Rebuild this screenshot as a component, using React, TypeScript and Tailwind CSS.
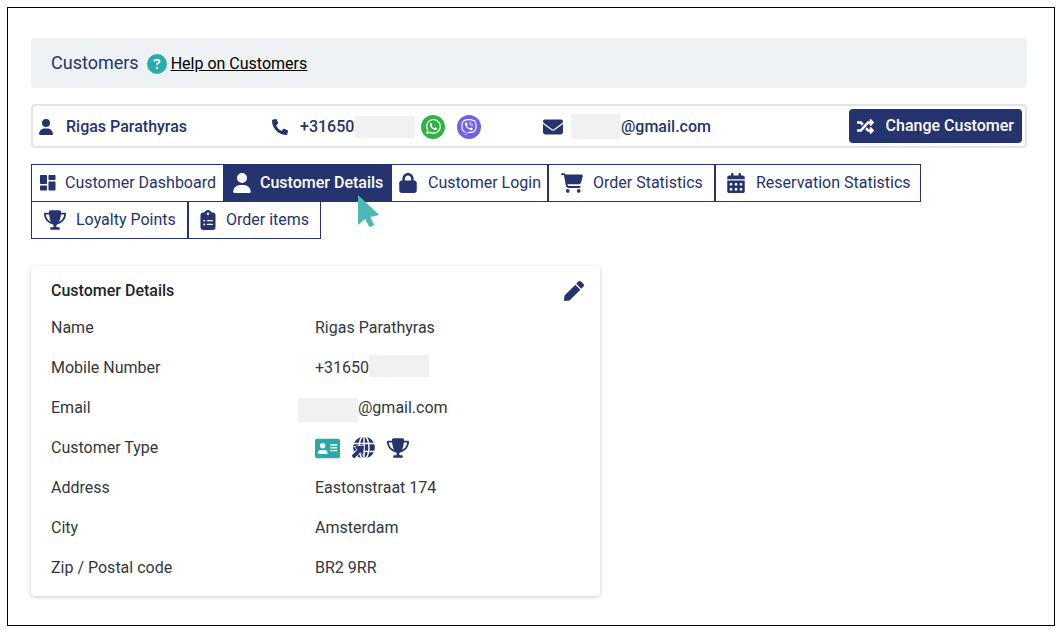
import type { ReactNode } from "react";
import { FaAddressCard, FaPen, FaPhoneAlt, FaRandom, FaViber, FaWhatsapp } from "react-icons/fa";
import {
  FaCalendarDays,
  FaCartShopping,
  FaCircleQuestion,
  FaClipboardList,
  FaEnvelope,
  FaLock,
  FaTrophy,
  FaUser,
} from "react-icons/fa6";
import clsx from "clsx";

const TABS = [
  { label: "Customer Dashboard", icon: <DashboardIcon />, className: "w-[193px] pl-[7px] gap-2" },
  { label: "Customer Details", icon: <FaUser size={20} />, className: "w-[167px] pl-[7px] gap-2", active: true },
  { label: "Customer Login", icon: <FaLock size={20} />, className: "w-[157px] pl-1.5 gap-2.5" },
  { label: "Order Statistics", icon: <FaCartShopping size={22} />, className: "w-[167px] pl-3 gap-2.5" },
  { label: "Reservation Statistics", icon: <FaCalendarDays size={20} />, className: "w-[206px] pl-2.5 gap-2.5" },
  { label: "Loyalty Points", icon: <FaTrophy size={22} />, className: "w-[157px] pl-3 gap-2.5" },
  { label: "Order items", icon: <FaClipboardList size={20} />, className: "w-[133px] pl-[9px] gap-2" },
];

const DETAILS: { label: string; value: ReactNode }[] = [
  { label: "Name", value: "Rigas Parathyras" },
  { label: "Mobile Number", value: <>+31650<Redacted className="mb-1 h-[22px] w-[60px]" /></> },
  { label: "Email", value: <><Redacted className="-ml-[17px] mt-1 h-6 w-[60px]" />@gmail.com</> },
  {
    label: "Customer Type",
    value: (
      <span className="flex items-center gap-3 text-[#25336f]">
        <FaAddressCard size={25} className="text-[#2aa9a8]" />
        <GlobePointerIcon />
        <FaTrophy size={22} />
      </span>
    ),
  },
  { label: "Address", value: "Eastonstraat 174" },
  { label: "City", value: "Amsterdam" },
  { label: "Zip / Postal code", value: "BR2 9RR" },
];

export default function App() {
  return (
    <div className="bg-white p-[7px] pr-2 font-[Roboto,sans-serif] text-base text-[#25336f]">
      <main className="border border-black pt-[30px] pr-[27px] pb-[29px] pl-[23px]">
        <header className="flex h-[50px] items-center rounded bg-[#eef2f5] px-5 pt-0.5">
          <h1 className="pb-0.5 text-lg">Customers</h1>
          <FaCircleQuestion size={20} className="ml-2 text-[#2aacab]" />
          <a href="#help" className="ml-1 text-black underline">Help on Customers</a>
        </header>

        <CustomerBar />

        <nav className="mt-4 flex flex-wrap">
          {TABS.map(tab => (
            <button
              key={tab.label}
              type="button"
              className={clsx(
                "relative -mb-px flex h-[38px] items-center border border-[#25336f] whitespace-nowrap",
                tab.className,
                tab.active ? "bg-[#25336f] font-medium text-white" : "bg-white",
              )}
            >
              {tab.icon}
              {tab.label}
              {tab.active && <CursorIcon />}
            </button>
          ))}
        </nav>

        <DetailsCard />
      </main>
    </div>
  );
}

function CustomerBar() {
  return (
    <section className="mt-4 flex h-11 items-center rounded border-2 border-[#e1e5e8] pr-[3px] pl-[5px] font-medium">
      <div className="flex w-[234px] items-center gap-3 pt-px">
        <FaUser size={16} /> Rigas Parathyras
      </div>
      <div className="flex w-[271px] items-center pt-px">
        <FaPhoneAlt size={16} className="mr-3" />
        +31650
        <Redacted className="ml-px h-[22px] w-[60px]" />
        <a href="#whatsapp" aria-label="WhatsApp" className="ml-1.5 flex size-6 items-center justify-center rounded-full bg-[#2fb344] text-white">
          <FaWhatsapp size={17} />
        </a>
        <a href="#viber" aria-label="Viber" className="ml-3 flex size-6 items-center justify-center rounded-full bg-[#7360e4] text-white">
          <FaViber size={16} />
        </a>
      </div>
      <div className="flex items-center pt-px">
        <FaEnvelope size={20} className="mr-2" />
        <Redacted className="h-[25px] w-[50px]" />
        @gmail.com
      </div>
      <button type="button" className="ml-auto flex h-[34px] items-center gap-3 rounded-sm bg-[#25336f] px-2 text-white">
        <FaRandom size={17} /> Change Customer
      </button>
    </section>
  );
}

function DetailsCard() {
  return (
    <section className="mt-7 w-[569px] max-w-full rounded px-5 pt-2 pb-2 text-[#32373c] shadow-[0_1px_4px_rgba(0,0,0,0.2)]">
      <div className="flex h-[34px] items-center justify-between">
        <h2 className="font-medium text-[#212529]">Customer Details</h2>
        <button type="button" aria-label="Edit customer" className="-mr-1 text-[#25336f]">
          <FaPen size={20} />
        </button>
      </div>
      <dl>
        {DETAILS.map(row => (
          <div key={row.label} className="flex h-10 items-center">
            <dt className="w-[264px]">{row.label}</dt>
            <dd className="flex items-center">{row.value}</dd>
          </div>
        ))}
      </dl>
    </section>
  );
}

function Redacted({ className }: { className: string }) {
  return <span className={clsx("inline-block bg-[#f1f1f1]", className)} />;
}

function DashboardIcon() {
  return (
    <svg width="18" height="18" viewBox="0 0 18 18" fill="currentColor">
      <rect x="1" y="1" width="7" height="9" rx="0.8" />
      <rect x="9.500" y="1" width="7" height="5" rx="0.8" />
      <rect x="1" y="11.500" width="7" height="5" rx="0.8" />
      <rect x="9.500" y="7.500" width="7" height="9" rx="0.8" />
    </svg>
  );
}

function GlobePointerIcon() {
  return (
    <svg width="23" height="24" viewBox="0 0 23 24">
      <circle cx="12" cy="11.5" r="10.800" fill="currentColor" />
      <g fill="none" stroke="#fff" strokeWidth="1.400">
        <ellipse cx="12" cy="11.5" rx="5" ry="11.500" />
        <path d="M12 0v24M0 7.500h23M0 15.500h23" />
      </g>
      <path d="M2.500 10.500l9.500-1 -1 9.500-2.800-2.800-6 6.300-2.700-2.700 6-6z" fill="currentColor" stroke="#fff" strokeWidth="1.200" paintOrder="stroke" />
    </svg>
  );
}

function CursorIcon() {
  return (
    <svg width="22" height="34" viewBox="0 0 22 34" fill="#4bb9b4" className="absolute top-[29px] left-[133px] z-10">
      <path d="M0 1v30l7-6 4.500 8.200 4.800-2-4-8.200 9-2z" />
    </svg>
  );
}
